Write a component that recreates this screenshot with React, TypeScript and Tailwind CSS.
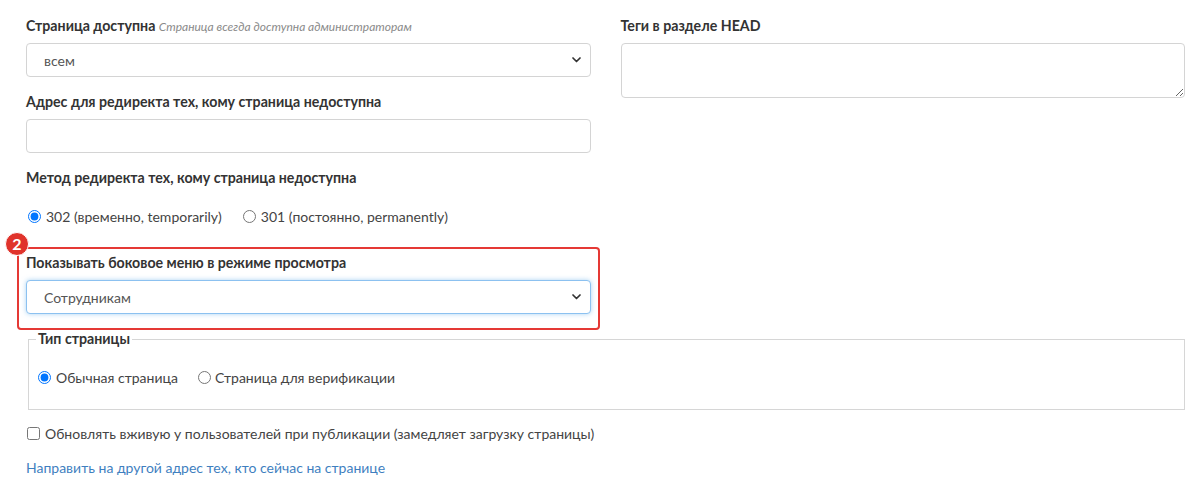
import React from 'react';

const font = { fontFamily: 'Lato, "Open Sans", Arial, sans-serif' };

function Chevron() {
  return (
    <svg className="pointer-events-none absolute right-[10px] top-1/2 -translate-y-1/2" width="9" height="6" viewBox="0 0 9 6">
      <path d="M1 1 L4.5 4.5 L8 1" fill="none" stroke="#333" strokeWidth="1.7" strokeLinecap="round" strokeLinejoin="round" />
    </svg>
  );
}

function Select({ value, focused = false }: { value: string; focused?: boolean }) {
  return (
    <div className="relative">
      <select
        defaultValue={value}
        className={
          'h-[34px] w-full appearance-none rounded-[4px] border bg-white pl-[17px] pr-8 text-[14px] text-[#555] outline-none ' +
          (focused ? 'border-[#8cc1f0] shadow-[0_0_5px_rgba(102,175,233,0.55)]' : 'border-[#d4d4d4]')
        }
      >
        <option>{value}</option>
      </select>
      <Chevron />
    </div>
  );
}

function Label({ children }: { children: React.ReactNode }) {
  return <div className="mb-[7px] h-5 text-[14.2px] font-bold leading-5 text-[#333]">{children}</div>;
}

export default function App() {
  return (
    <div className="min-h-[485px] bg-white pl-[26px] pr-[15px] pt-4 text-[#333]" style={font}>
      <div className="grid grid-cols-2 gap-[30px]">
        <div>
          <Label>
            Страница доступна{' '}
            <span className="text-[12px] font-normal italic text-[#8a8a8a]">Страница всегда доступна администраторам</span>
          </Label>
          <Select value="всем" />

          <div className="mt-[15px]">
            <Label>Адрес для редиректа тех, кому страница недоступна</Label>
            <input type="text" className="block h-[34px] w-full rounded-[4px] border border-[#d4d4d4] bg-white outline-none" />
          </div>

          <div className="mt-[15px] h-5 text-[14.2px] font-bold leading-5">Метод редиректа тех, кому страница недоступна</div>
          <div className="mt-[18px] flex h-5 items-center text-[14px] text-[#444]">
            <label className="flex items-center">
              <input type="radio" name="redir" defaultChecked className="m-0 ml-[2px] mr-[5px] h-[13px] w-[13px]" />
              302 (временно, temporarily)
            </label>
            <label className="ml-[21px] flex items-center">
              <input type="radio" name="redir" className="m-0 mr-[5px] h-[13px] w-[13px]" />
              301 (постоянно, permanently)
            </label>
          </div>

          <div className="relative -mx-[9px] mt-[21px] rounded-[4px] border-2 border-[#e53935] px-[7px] pb-[14px] pt-[4px]">
            <div className="absolute left-[-14px] top-[-17px] flex h-[24px] w-[24px] items-center justify-center rounded-full border border-white bg-[#e0332b] text-[16px] font-bold leading-none text-white">
              2
            </div>
            <Label>Показывать боковое меню в режиме просмотра</Label>
            <Select value="Сотрудникам" focused />
          </div>
        </div>

        <div>
          <Label>Теги в разделе HEAD</Label>
          <textarea className="block h-[55px] w-full rounded-[4px] border border-[#d4d4d4] bg-white outline-none" />
        </div>
      </div>

      <fieldset className="ml-[2px] mt-[-1px] border border-[#d6d6d6] pb-[22px] pl-[7px] pr-2 pt-[18px]">
        <legend className="px-[2px] text-[14.2px] font-bold leading-5">Тип страницы</legend>
        <div className="flex h-5 items-center text-[14px] text-[#444]">
          <label className="flex items-center">
            <input type="radio" name="ptype" defaultChecked className="m-0 ml-[2px] mr-[5px] h-[13px] w-[13px]" />
            Обычная страница
          </label>
          <label className="ml-[20px] flex items-center">
            <input type="radio" name="ptype" className="m-0 mr-[4px] h-[13px] w-[13px]" />
            Страница для верификации
          </label>
        </div>
      </fieldset>

      <label className="mt-[13px] flex h-5 items-center text-[14px] text-[#444]">
        <input type="checkbox" className="m-0 ml-[1px] mr-[5px] h-[13px] w-[13px]" />
        Обновлять вживую у пользователей при публикации (замедляет загрузку страницы)
      </label>

      <a href="#" className="mt-[15px] block h-5 text-[14px] leading-5 text-[#3f7fbf]">
        Направить на другой адрес тех, кто сейчас на странице
      </a>
    </div>
  );
}
